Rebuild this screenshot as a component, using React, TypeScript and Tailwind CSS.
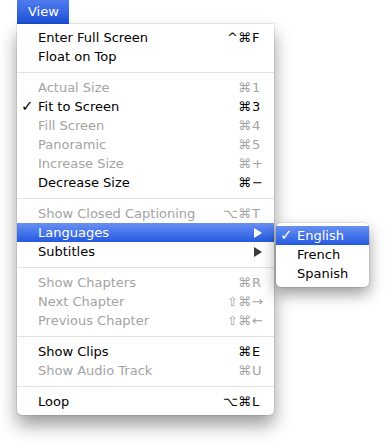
import React from "react";

type Item =
  | { sep: true }
  | {
      sep?: false;
      label: string;
      mods?: string;
      keyChar?: string;
      disabled?: boolean;
      checked?: boolean;
      submenu?: boolean;
      active?: boolean;
    };

// view menu items, top to bottom
const items: Item[] = [
  { label: "Enter Full Screen", mods: "^⌘", keyChar: "F" },
  { label: "Float on Top" },
  { sep: true },
  { label: "Actual Size", mods: "⌘", keyChar: "1", disabled: true },
  { label: "Fit to Screen", mods: "⌘", keyChar: "3", checked: true },
  { label: "Fill Screen", mods: "⌘", keyChar: "4", disabled: true },
  { label: "Panoramic", mods: "⌘", keyChar: "5", disabled: true },
  { label: "Increase Size", mods: "⌘", keyChar: "+", disabled: true },
  { label: "Decrease Size", mods: "⌘", keyChar: "−" },
  { sep: true },
  { label: "Show Closed Captioning", mods: "⌥⌘", keyChar: "T", disabled: true },
  { label: "Languages", submenu: true, active: true },
  { label: "Subtitles", submenu: true },
  { sep: true },
  { label: "Show Chapters", mods: "⌘", keyChar: "R", disabled: true },
  { label: "Next Chapter", mods: "⇧⌘", keyChar: "→", disabled: true },
  { label: "Previous Chapter", mods: "⇧⌘", keyChar: "←", disabled: true },
  { sep: true },
  { label: "Show Clips", mods: "⌘", keyChar: "E" },
  { label: "Show Audio Track", mods: "⌘", keyChar: "U", disabled: true },
  { sep: true },
  { label: "Loop", mods: "⌥⌘", keyChar: "L" },
];

const languages = [
  { label: "English", checked: true },
  { label: "French" },
  { label: "Spanish" },
];

const highlight = "bg-gradient-to-b from-[#6890f2] to-[#2458e0] text-white";

const Arrow: React.FC<{ white?: boolean }> = ({ white }) => (
  <svg width="8" height="10" viewBox="0 0 8 10" className="block">
    <path d="M0 0 L8 5 L0 10 Z" fill={white ? "#ffffff" : "#3a3a3a"} />
  </svg>
);

const Check: React.FC = () => (
  <span className="absolute left-[4px] top-0 leading-[19px] text-[15px]">✓</span>
);

const SubMenu: React.FC = () => (
  <div className="absolute left-[259px] top-0 w-[93px] bg-white rounded-[5px] pt-[3px] pb-[4px] shadow-[0_0_0_1px_rgba(0,0,0,0.08),0_7px_15px_rgba(0,0,0,0.4)] z-10">
    {languages.map((lang) => (
      <div
        key={lang.label}
        className={`relative h-[19px] flex items-center pl-[21px] ${
          lang.checked ? highlight : "text-black"
        }`}
      >
        {lang.checked ? <Check /> : null}
        {lang.label}
      </div>
    ))}
  </div>
);

export default function App() {
  return (
    <div
      className="w-[385px] h-[443px] bg-white pl-[17px] text-[13px]"
      style={{ fontFamily: '"DejaVu Sans", "Noto Sans", sans-serif' }}
    >
      {/* menu bar title */}
      <div className="w-[52px] h-[24px] bg-gradient-to-b from-[#4f7bec] to-[#1d4fd8] text-white flex items-center pl-[11px]">
        View
      </div>

      {/* dropdown */}
      <div className="w-[257px] bg-white rounded-b-[5px] pt-[4px] pb-[4px] shadow-[0_0_0_1px_rgba(0,0,0,0.07),0_10px_18px_rgba(0,0,0,0.4)]">
        {items.map((item, index) => {
          if (item.sep) {
            return (
              <div key={index} className="h-[12px] pt-[6px]">
                <div className="h-px bg-[#e2e2e2]" />
              </div>
            );
          }
          const color = item.active
            ? highlight
            : item.disabled
            ? "text-[#a3a3a3]"
            : "text-black";
          return (
            <div
              key={index}
              className={`relative h-[19px] flex items-center pl-[21px] pr-[11px] ${color}`}
            >
              {item.checked ? <Check /> : null}
              <span className="flex-1 whitespace-nowrap">{item.label}</span>
              {item.mods ? (
                <span className="flex items-center">
                  <span className="text-right">{item.mods}</span>
                  <span className="w-[12px] pl-[1px]">{item.keyChar}</span>
                </span>
              ) : null}
              {item.submenu ? (
                <span className="w-[12px] flex items-center justify-end pr-[1px]">
                  <Arrow white={item.active} />
                </span>
              ) : null}
              {item.active ? <SubMenu /> : null}
            </div>
          );
        })}
      </div>
    </div>
  );
}
